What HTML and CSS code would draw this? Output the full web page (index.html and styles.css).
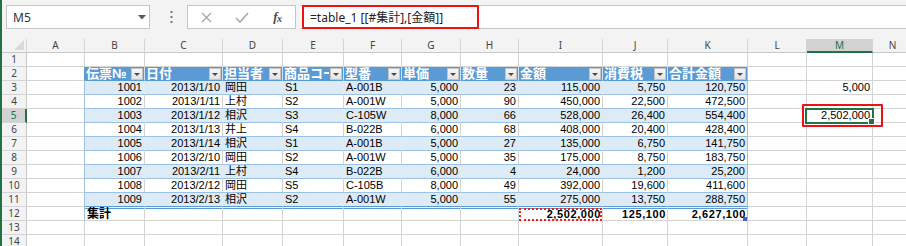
FILE: index.html
```html
<!DOCTYPE html>
<html lang="ja">
<head>
<meta charset="utf-8">
<title>Excel table</title>
<link rel="stylesheet" href="styles.css">
</head>
<body>
<div class="app">
  <div class="fbar">
    <div class="namebox">M5<svg class="nb-arrow" width="8" height="5" viewBox="0 0 8 5"><path d="M0 0h8L4 4.5z" fill="#5a5a5a"/></svg></div>
    <div class="vdots"><svg width="3" height="12" viewBox="0 0 3 12"><rect x="0.5" y="0" width="2" height="2" fill="#7a7a7a"/><rect x="0.5" y="5" width="2" height="2" fill="#7a7a7a"/><rect x="0.5" y="10" width="2" height="2" fill="#7a7a7a"/></svg></div>
    <div class="btns">
      <span class="slot"><svg width="11" height="11" viewBox="0 0 11 11"><path d="M1 1l9 9M10 1l-9 9" stroke="#a8a8a8" stroke-width="1.4" fill="none"/></svg></span>
      <span class="slot"><svg width="14" height="11" viewBox="0 0 14 11"><path d="M1 6l4 4L13 1" stroke="#a8a8a8" stroke-width="1.6" fill="none"/></svg></span>
      <span class="slot fx">f<span class="fx-x">x</span></span>
    </div>
    <div class="finput">
      <span class="ftext">=table_1 [[#集計],[金額]]</span>
      <span class="fmark"></span>
    </div>
  </div>

  <div class="sheet">
    <!-- column headers -->
    <div class="c corner"><svg width="10" height="10" viewBox="0 0 10 10"><path d="M10 0V10H0z" fill="#dadada"/></svg></div>
    <div class="c ch">A</div><div class="c ch">B</div><div class="c ch">C</div><div class="c ch">D</div><div class="c ch">E</div><div class="c ch">F</div><div class="c ch">G</div><div class="c ch">H</div><div class="c ch">I</div><div class="c ch">J</div><div class="c ch">K</div><div class="c ch">L</div><div class="c ch sel">M</div><div class="c ch">N</div>

    <!-- row 1 -->
    <div class="c rh">1</div>
    <div class="c"></div><div class="c"></div><div class="c"></div><div class="c"></div><div class="c"></div><div class="c"></div><div class="c"></div><div class="c"></div><div class="c"></div><div class="c"></div><div class="c"></div><div class="c"></div><div class="c"></div><div class="c"></div>

    <!-- row 2 table header -->
    <div class="c rh">2</div>
    <div class="c ae2"></div>
    <div class="c th"><span class="tx">伝票№</span><i class="dd"></i></div>
    <div class="c th"><span class="tx">日付</span><i class="dd"></i></div>
    <div class="c th"><span class="tx">担当者</span><i class="dd"></i></div>
    <div class="c th"><span class="tx">商品コード</span><i class="dd"></i></div>
    <div class="c th"><span class="tx">型番</span><i class="dd"></i></div>
    <div class="c th"><span class="tx">単価</span><i class="dd"></i></div>
    <div class="c th"><span class="tx">数量</span><i class="dd"></i></div>
    <div class="c th"><span class="tx">金額</span><i class="dd"></i></div>
    <div class="c th"><span class="tx">消費税</span><i class="dd"></i></div>
    <div class="c th ke"><span class="tx">合計金額</span><i class="dd"></i></div>
    <div class="c"></div><div class="c"></div><div class="c"></div>

    <!-- row 3 -->
    <div class="c rh">3</div>
    <div class="c ae"></div>
    <div class="c tb n">1001</div><div class="c tb n">2013/1/10</div><div class="c tb">岡田</div><div class="c tb">S1</div><div class="c tb">A-001B</div><div class="c tb n">5,000</div><div class="c tb n">23</div><div class="c tb n">115,000</div><div class="c tb n">5,750</div><div class="c tb n ke">120,750</div>
    <div class="c"></div><div class="c n">5,000</div><div class="c"></div>

    <!-- row 4 -->
    <div class="c rh">4</div>
    <div class="c ae"></div>
    <div class="c tw n">1002</div><div class="c tw n">2013/1/11</div><div class="c tw">上村</div><div class="c tw">S2</div><div class="c tw">A-001W</div><div class="c tw n">5,000</div><div class="c tw n">90</div><div class="c tw n">450,000</div><div class="c tw n">22,500</div><div class="c tw n ke">472,500</div>
    <div class="c"></div><div class="c"></div><div class="c"></div>

    <!-- row 5 -->
    <div class="c rh sel">5</div>
    <div class="c ae"></div>
    <div class="c tb n">1003</div><div class="c tb n">2013/1/12</div><div class="c tb">相沢</div><div class="c tb">S3</div><div class="c tb">C-105W</div><div class="c tb n">8,000</div><div class="c tb n">66</div><div class="c tb n">528,000</div><div class="c tb n">26,400</div><div class="c tb n ke">554,400</div>
    <div class="c"></div><div class="c n active">2,502,000<span class="selbox"></span><span class="fill"></span><span class="redmark"></span></div><div class="c"></div>

    <!-- row 6 -->
    <div class="c rh">6</div>
    <div class="c ae"></div>
    <div class="c tw n">1004</div><div class="c tw n">2013/1/13</div><div class="c tw">井上</div><div class="c tw">S4</div><div class="c tw">B-022B</div><div class="c tw n">6,000</div><div class="c tw n">68</div><div class="c tw n">408,000</div><div class="c tw n">20,400</div><div class="c tw n ke">428,400</div>
    <div class="c"></div><div class="c"></div><div class="c"></div>

    <!-- row 7 -->
    <div class="c rh">7</div>
    <div class="c ae"></div>
    <div class="c tb n">1005</div><div class="c tb n">2013/1/14</div><div class="c tb">相沢</div><div class="c tb">S1</div><div class="c tb">A-001B</div><div class="c tb n">5,000</div><div class="c tb n">27</div><div class="c tb n">135,000</div><div class="c tb n">6,750</div><div class="c tb n ke">141,750</div>
    <div class="c"></div><div class="c"></div><div class="c"></div>

    <!-- row 8 -->
    <div class="c rh">8</div>
    <div class="c ae"></div>
    <div class="c tw n">1006</div><div class="c tw n">2013/2/10</div><div class="c tw">岡田</div><div class="c tw">S2</div><div class="c tw">A-001W</div><div class="c tw n">5,000</div><div class="c tw n">35</div><div class="c tw n">175,000</div><div class="c tw n">8,750</div><div class="c tw n ke">183,750</div>
    <div class="c"></div><div class="c"></div><div class="c"></div>

    <!-- row 9 -->
    <div class="c rh">9</div>
    <div class="c ae"></div>
    <div class="c tb n">1007</div><div class="c tb n">2013/2/11</div><div class="c tb">上村</div><div class="c tb">S4</div><div class="c tb">B-022B</div><div class="c tb n">6,000</div><div class="c tb n">4</div><div class="c tb n">24,000</div><div class="c tb n">1,200</div><div class="c tb n ke">25,200</div>
    <div class="c"></div><div class="c"></div><div class="c"></div>

    <!-- row 10 -->
    <div class="c rh">10</div>
    <div class="c ae"></div>
    <div class="c tw n">1008</div><div class="c tw n">2013/2/12</div><div class="c tw">岡田</div><div class="c tw">S5</div><div class="c tw">C-105B</div><div class="c tw n">8,000</div><div class="c tw n">49</div><div class="c tw n">392,000</div><div class="c tw n">19,600</div><div class="c tw n ke">411,600</div>
    <div class="c"></div><div class="c"></div><div class="c"></div>

    <!-- row 11 -->
    <div class="c rh">11</div>
    <div class="c ae"></div>
    <div class="c tb last n">1009</div><div class="c tb last n">2013/2/13</div><div class="c tb last">相沢</div><div class="c tb last">S2</div><div class="c tb last">A-001W</div><div class="c tb last n">5,000</div><div class="c tb last n">55</div><div class="c tb last n">275,000</div><div class="c tb last n">13,750</div><div class="c tb last n ke">288,750</div>
    <div class="c"></div><div class="c"></div><div class="c"></div>

    <!-- row 12 totals -->
    <div class="c rh">12</div>
    <div class="c ae"></div>
    <div class="c tt lbl">集計</div><div class="c tt"></div><div class="c tt"></div><div class="c tt"></div><div class="c tt"></div><div class="c tt"></div><div class="c tt"></div>
    <div class="c tt n sum">2,502,000<span class="marquee"></span></div>
    <div class="c tt n sum">125,100</div>
    <div class="c tt n sum ke kend">2,627,100<span class="resize"></span></div>
    <div class="c"></div><div class="c"></div><div class="c"></div>

    <!-- row 13 -->
    <div class="c rh">13</div>
    <div class="c"></div><div class="c"></div><div class="c"></div><div class="c"></div><div class="c"></div><div class="c"></div><div class="c"></div><div class="c"></div><div class="c"></div><div class="c"></div><div class="c"></div><div class="c"></div><div class="c"></div><div class="c"></div>

    <!-- row 14 -->
    <div class="c rh">14</div>
    <div class="c"></div><div class="c"></div><div class="c"></div><div class="c"></div><div class="c"></div><div class="c"></div><div class="c"></div><div class="c"></div><div class="c"></div><div class="c"></div><div class="c"></div><div class="c"></div><div class="c"></div><div class="c"></div>
  </div>
</div>
</body>
</html>
```
FILE: styles.css
```css
html, body {
  margin: 0;
  padding: 0;
  background: #ffffff;
}
body {
  width: 906px;
  height: 246px;
  overflow: hidden;
}
.app {
  box-sizing: border-box;
  width: 906px;
  height: 246px;
  border-left: 2px solid #217346;
  background: #f3f3f3;
  overflow: hidden;
}

/* ---------- formula bar ---------- */
.fbar {
  box-sizing: border-box;
  height: 39px;
  padding-top: 5px;
  display: flex;
  align-items: flex-start;
}
.namebox {
  box-sizing: border-box;
  margin-left: 4px;
  width: 144px;
  height: 24px;
  background: #fff;
  border: 1px solid #c6c6c6;
  display: flex;
  align-items: center;
  justify-content: space-between;
  padding: 0 3px 0 6px;
  font: 12px "Noto Sans", "Liberation Sans", sans-serif;
  color: #333;
}
.vdots {
  width: 37px;
  height: 24px;
  display: flex;
  align-items: center;
  justify-content: center;
  padding-left: 6px;
  box-sizing: border-box;
}
.btns {
  box-sizing: border-box;
  width: 109px;
  height: 24px;
  background: #fff;
  border: 1px solid #c6c6c6;
  display: flex;
  align-items: center;
  padding-left: 1px;
}
.slot {
  width: 36px;
  height: 22px;
  display: flex;
  align-items: center;
  justify-content: center;
}
.fx {
  font: italic bold 13px "Liberation Serif", "DejaVu Serif", serif;
  color: #4a4a4a;
  letter-spacing: -0.5px;
}
.fx-x {
  font-size: 10px;
  position: relative;
  top: 1px;
}
.finput {
  position: relative;
  box-sizing: border-box;
  flex: 1;
  margin-left: 4px;
  height: 24px;
  background: #fff;
  border-top: 1px solid #c6c6c6;
  border-bottom: 1px solid #c6c6c6;
  display: flex;
  align-items: center;
  padding-left: 10px;
  font: 12px "Noto Sans", "Noto Sans CJK JP", sans-serif;
  color: #222;
  white-space: nowrap;
}
.fmark {
  position: absolute;
  left: 2px;
  top: -1px;
  width: 177px;
  height: 24px;
  box-sizing: border-box;
  border: 2px solid #ee1111;
  border-radius: 1px;
}

/* ---------- sheet grid ---------- */
.sheet {
  display: grid;
  grid-template-columns: 25px 58px 60px 78px 60px 61px 58px 59px 58px 84px 65px 80px 59px 66px 40px;
  grid-auto-rows: 14px;
  background: #fff;
}
.c {
  box-sizing: border-box;
  border-right: 1px solid #d4d4d4;
  border-bottom: 1px solid #d4d4d4;
  overflow: hidden;
  white-space: nowrap;
  padding: 0 2px;
  font: 11px "Liberation Sans", "Noto Sans CJK JP", sans-serif;
  line-height: 13px;
  color: #000;
}
.n { text-align: right; }

.corner {
  background: #f3f3f3;
  display: flex;
  align-items: flex-end;
  justify-content: flex-end;
  padding: 0 2px 2px 0;
  border-bottom-color: #c8c8c8;
}
.ch {
  background: #f3f3f3;
  text-align: center;
  color: #444;
  font: 10px "Noto Sans", "Liberation Sans", sans-serif;
  line-height: 13px;
  border-bottom-color: #c8c8c8;
}
.ch.sel {
  background: #d2d2d2;
  color: #217346;
  border-bottom: 2px solid #217346;
  line-height: 12px;
}
.rh {
  background: #f3f3f3;
  text-align: center;
  color: #444;
  font: 10px "Noto Sans", "Liberation Sans", sans-serif;
  line-height: 13px;
  border-right-color: #c8c8c8;
}
.rh.sel {
  background: #d2d2d2;
  color: #217346;
  border-right: 2px solid #217346;
}

/* ---------- table ---------- */
.ae2 { border-right-color: #5b9bd5; }
.ae { border-right-color: #9bc2e6; }
.th {
  position: relative;
  background: #5b9bd5;
  color: #fff;
  font-weight: bold;
  font-size: 13px;
  line-height: 13px;
  padding: 0 14px 0 1px;
  border-right-color: #cfe0f3;
  border-bottom-color: #5b9bd5;
}
.tx {
  display: block;
  overflow: hidden;
  white-space: nowrap;
}
.dd {
  position: absolute;
  right: 1px;
  top: 1px;
  width: 12px;
  height: 12px;
  box-sizing: border-box;
  border: 1px solid #c4c4c4;
  background: linear-gradient(#f7f7f7, #e3e3e3);
}
.dd::after {
  content: "";
  position: absolute;
  left: 2px;
  top: 4px;
  border-left: 3px solid transparent;
  border-right: 3px solid transparent;
  border-top: 3px solid #4a4a4a;
}
.tb {
  background: #ddebf7;
  border-right-color: #ddebf7;
  border-bottom-color: #9bc2e6;
}
.tw {
  border-bottom-color: #9bc2e6;
}
.tb.last { border-bottom-color: #5b9bd5; }
.ke { border-right-color: #9bc2e6; }
.th.ke { border-right-color: #9bc2e6; }
.tt {
  box-shadow: inset 0 1px 0 #fff, inset 0 2px 0 #5b9bd5;
  padding-top: 1px;
}
.lbl {
  font-weight: bold;
  font-size: 12px;
  line-height: 13px;
}
.sum {
  position: relative;
  overflow: visible;
  font-weight: bold;
  font-size: 11px;
  letter-spacing: 0.6px;
  padding-right: 1px;
}
.marquee {
  position: absolute;
  left: 0;
  top: 1px;
  right: 0;
  bottom: -1px;
  border: 2px dotted #ff1a1a;
}
.resize {
  position: absolute;
  right: 0;
  bottom: -1px;
  width: 4px;
  height: 4px;
  background: #4663b8;
}

/* ---------- active cell ---------- */
.active {
  position: relative;
  overflow: visible;
}
.selbox {
  position: absolute;
  left: -2px;
  top: -1px;
  right: -2px;
  bottom: -2px;
  border: 2px solid #217346;
}
.fill {
  position: absolute;
  right: -3px;
  bottom: -3px;
  width: 5px;
  height: 5px;
  background: #217346;
  border: 1px solid #fff;
}
.redmark {
  position: absolute;
  left: -5px;
  top: -5px;
  right: -11px;
  bottom: -5px;
  border: 2px solid #ee1111;
  border-radius: 1px;
}
```
